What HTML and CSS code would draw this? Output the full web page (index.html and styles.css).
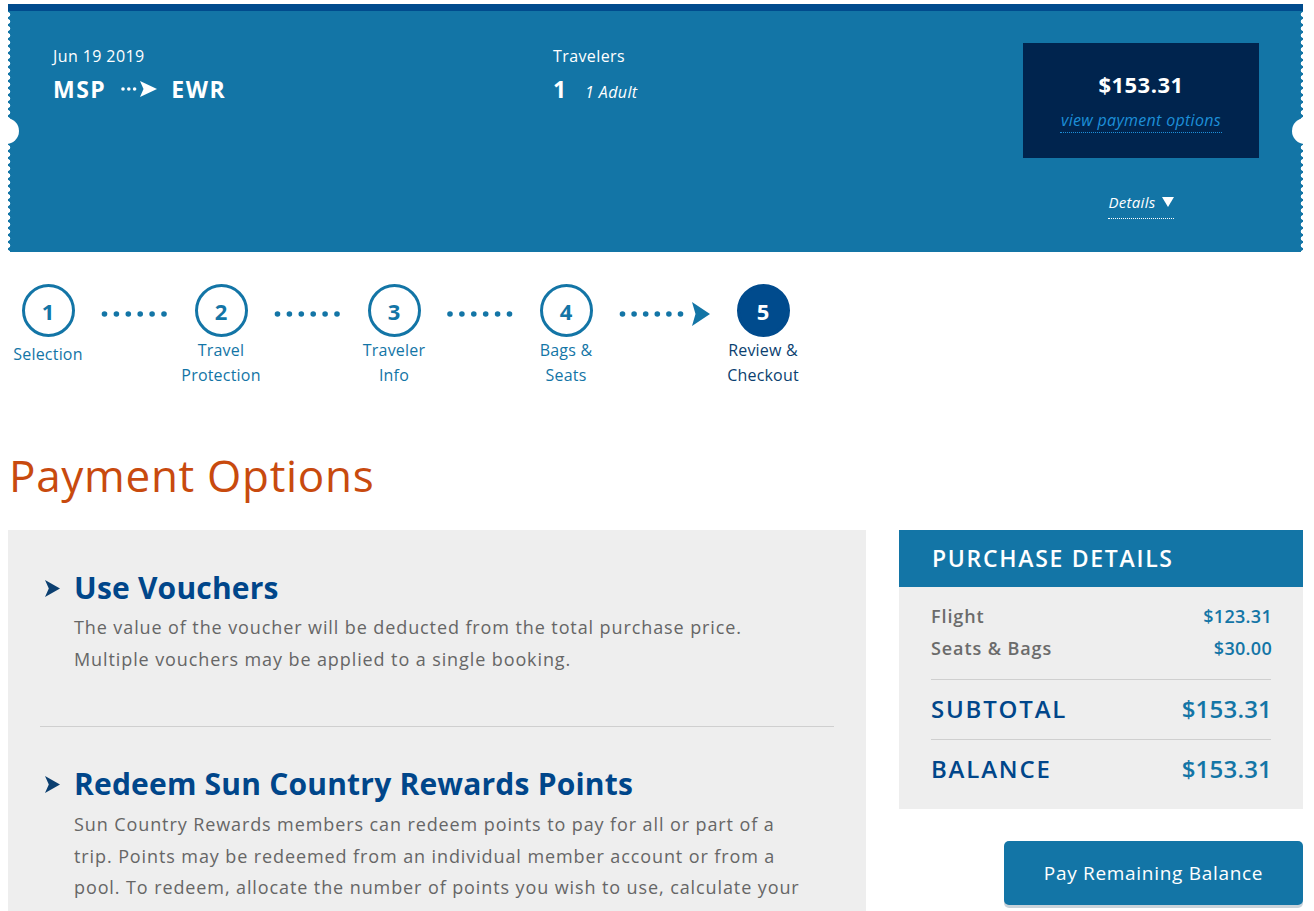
FILE: index.html
```html
<!DOCTYPE html>
<html lang="en">
<head>
<meta charset="utf-8">
<title>Payment Options</title>
<link rel="stylesheet" href="styles.css">
</head>
<body>
<div class="page">
  <header class="trip">
    <span class="edge edge-l"></span>
    <span class="edge edge-r"></span>
    <span class="notch notch-l"></span>
    <span class="notch notch-r"></span>
    <div class="trip-route">
      <div class="trip-label">Jun 19 2019</div>
      <div class="route">
        <span class="code">MSP</span>
        <svg class="route-arrow" width="37" height="16" viewBox="0 0 37 16" aria-hidden="true">
          <circle cx="2" cy="8" r="1.8" fill="#fff"/>
          <circle cx="7.8" cy="8" r="1.8" fill="#fff"/>
          <circle cx="13.6" cy="8" r="1.8" fill="#fff"/>
          <path d="M19 0 L36 8 L19 16 L22.5 8 Z" fill="#fff"/>
        </svg>
        <span class="code">EWR</span>
      </div>
    </div>
    <div class="trip-travelers">
      <div class="trip-label">Travelers</div>
      <div class="travelers"><span class="count">1</span><span class="adult">1 Adult</span></div>
    </div>
    <div class="trip-price">
      <div class="price-box">
        <div class="price">$153.31</div>
        <a class="pay-link" href="#">view payment options</a>
      </div>
      <a class="details" href="#">Details <svg width="12" height="10" viewBox="0 0 12 10" aria-hidden="true"><path d="M0 0 H12 L6 10 Z" fill="#fff"/></svg></a>
    </div>
  </header>

  <nav class="steps">
    <div class="step">
      <div class="step-circle">1</div>
      <div class="step-label single">Selection</div>
    </div>
    <div class="connector c93">
      <svg width="93" height="53" viewBox="0 0 93 53" aria-hidden="true">
        <circle cx="16.5" cy="30" r="2.8"/><circle cx="28.4" cy="30" r="2.8"/><circle cx="40.3" cy="30" r="2.8"/><circle cx="52.2" cy="30" r="2.8"/><circle cx="64.1" cy="30" r="2.8"/><circle cx="76" cy="30" r="2.8"/>
      </svg>
    </div>
    <div class="step">
      <div class="step-circle">2</div>
      <div class="step-label">Travel<br>Protection</div>
    </div>
    <div class="connector c93">
      <svg width="93" height="53" viewBox="0 0 93 53" aria-hidden="true">
        <circle cx="16.5" cy="30" r="2.8"/><circle cx="28.4" cy="30" r="2.8"/><circle cx="40.3" cy="30" r="2.8"/><circle cx="52.2" cy="30" r="2.8"/><circle cx="64.1" cy="30" r="2.8"/><circle cx="76" cy="30" r="2.8"/>
      </svg>
    </div>
    <div class="step">
      <div class="step-circle">3</div>
      <div class="step-label">Traveler<br>Info</div>
    </div>
    <div class="connector c92">
      <svg width="92" height="53" viewBox="0 0 92 53" aria-hidden="true">
        <circle cx="16" cy="30" r="2.8"/><circle cx="27.9" cy="30" r="2.8"/><circle cx="39.8" cy="30" r="2.8"/><circle cx="51.7" cy="30" r="2.8"/><circle cx="63.6" cy="30" r="2.8"/><circle cx="75.5" cy="30" r="2.8"/>
      </svg>
    </div>
    <div class="step">
      <div class="step-circle">4</div>
      <div class="step-label">Bags &amp;<br>Seats</div>
    </div>
    <div class="connector c117">
      <svg width="117" height="53" viewBox="0 0 117 53" aria-hidden="true">
        <circle cx="16.5" cy="30" r="2.8"/><circle cx="28.1" cy="30" r="2.8"/><circle cx="39.7" cy="30" r="2.8"/><circle cx="51.3" cy="30" r="2.8"/><circle cx="62.9" cy="30" r="2.8"/><circle cx="74.5" cy="30" r="2.8"/>
        <path d="M86 18 L104 30 L86 42 L89.5 30 Z"/>
      </svg>
    </div>
    <div class="step current">
      <div class="step-circle">5</div>
      <div class="step-label">Review &amp;<br>Checkout</div>
    </div>
  </nav>

  <h1 class="page-title">Payment Options</h1>

  <main class="main">
    <section class="options">
      <div class="option">
        <h2 class="option-head">
          <svg class="chev" width="15" height="17" viewBox="0 0 15 17" aria-hidden="true"><path d="M0 0 L15 8.5 L0 17 L3.8 8.5 Z"/></svg>
          <span>Use Vouchers</span>
        </h2>
        <p class="option-text">The value of the voucher will be deducted from the total purchase price.<br>Multiple vouchers may be applied to a single booking.</p>
      </div>
      <div class="option option-sep">
        <h2 class="option-head">
          <svg class="chev" width="15" height="17" viewBox="0 0 15 17" aria-hidden="true"><path d="M0 0 L15 8.5 L0 17 L3.8 8.5 Z"/></svg>
          <span>Redeem Sun Country Rewards Points</span>
        </h2>
        <p class="option-text">Sun Country Rewards members can redeem points to pay for all or part of a<br>trip. Points may be redeemed from an individual member account or from a<br>pool. To redeem, allocate the number of points you wish to use, calculate your</p>
      </div>
    </section>

    <aside class="side">
      <div class="summary">
        <div class="summary-head">PURCHASE DETAILS</div>
        <div class="summary-body">
          <div class="sum-row"><span>Flight</span><span class="val">$123.31</span></div>
          <div class="sum-row"><span>Seats &amp; Bags</span><span class="val">$30.00</span></div>
          <div class="sum-total first"><span>SUBTOTAL</span><span class="val">$153.31</span></div>
          <div class="sum-total"><span>BALANCE</span><span class="val">$153.31</span></div>
        </div>
      </div>
      <button class="pay-btn" type="button">Pay Remaining Balance</button>
    </aside>
  </main>
</div>
</body>
</html>
```

FILE: styles.css
```css
html, body {
  margin: 0;
  padding: 0;
  background: #ffffff;
}

body {
  font-family: "Open Sans", "Liberation Sans", sans-serif;
  color: #666666;
  overflow: hidden;
}

.page {
  padding: 4px 11px 0 8px;
}

/* ---------- Ticket header ---------- */
.trip {
  position: relative;
  box-sizing: border-box;
  height: 248px;
  background: #1375a6;
  border-top: 7px solid #004b8d;
  display: flex;
  padding: 32px 44px 0 45px;
  color: #ffffff;
}

.edge {
  position: absolute;
  top: 0;
  bottom: 0;
  width: 3px;
  background-repeat: repeat-y;
  background-size: 3px 7px;
}

.edge-l {
  left: 0;
  background-image: radial-gradient(circle at 0 50%, #ffffff 2px, rgba(255,255,255,0) 2.6px);
}

.edge-r {
  right: 0;
  background-image: radial-gradient(circle at 100% 50%, #ffffff 2px, rgba(255,255,255,0) 2.6px);
}

.notch {
  position: absolute;
  top: 107px;
  width: 26px;
  height: 26px;
  border-radius: 50%;
  background: #ffffff;
}

.notch-l { left: -15px; }
.notch-r { right: -15px; }

.trip-route {
  width: 500px;
  padding-top: 3px;
}

.trip-travelers {
  flex: 1;
  padding-top: 3px;
}

.trip-label {
  font-size: 16px;
  line-height: 20px;
  letter-spacing: 0.4px;
}

.route {
  margin-top: 8px;
  display: flex;
  align-items: center;
  height: 30px;
}

.code {
  font-size: 23px;
  font-weight: 700;
  letter-spacing: 1.5px;
  line-height: 30px;
}

.route-arrow {
  margin: 0 13px 0 15px;
}

.travelers {
  margin-top: 8px;
  display: flex;
  align-items: baseline;
  height: 30px;
}

.count {
  font-size: 23px;
  font-weight: 700;
  line-height: 30px;
  width: 32px;
}

.adult {
  font-size: 16px;
  font-style: italic;
  letter-spacing: 0.4px;
}

.trip-price {
  width: 236px;
  display: flex;
  flex-direction: column;
  align-items: center;
}

.price-box {
  box-sizing: border-box;
  width: 236px;
  height: 115px;
  background: #00244e;
  padding-top: 26px;
  display: flex;
  flex-direction: column;
  align-items: center;
}

.price {
  font-size: 22px;
  font-weight: 700;
  line-height: 30px;
  letter-spacing: 0.5px;
}

.pay-link {
  margin-top: 11px;
  font-size: 16px;
  font-style: italic;
  line-height: 21px;
  letter-spacing: 0.3px;
  color: #1d8fd8;
  text-decoration: none;
  border-bottom: 1px dotted #1d8fd8;
  padding: 0 1px 1px;
}

.details {
  margin-top: 34px;
  font-size: 15px;
  font-style: italic;
  line-height: 20px;
  letter-spacing: 0.3px;
  color: #ffffff;
  text-decoration: none;
  border-bottom: 1px dotted #ffffff;
  padding-bottom: 6px;
  display: flex;
  align-items: center;
  gap: 6px;
}

/* ---------- Steps ---------- */
.steps {
  display: flex;
  align-items: flex-start;
  margin-top: 32px;
}

.step {
  width: 80px;
  display: flex;
  flex-direction: column;
  align-items: center;
}

.step-circle {
  box-sizing: border-box;
  width: 53px;
  height: 53px;
  border: 3px solid #1375a6;
  border-radius: 50%;
  display: flex;
  align-items: center;
  justify-content: center;
  font-size: 22px;
  font-weight: 700;
  color: #1375a6;
}

.step.current .step-circle {
  background: #004b8d;
  border-color: #004b8d;
  color: #ffffff;
}

.step-label {
  margin-top: 1px;
  font-size: 16px;
  line-height: 25px;
  letter-spacing: 0.2px;
  text-align: center;
  color: #1375a6;
  white-space: nowrap;
}

.step-label.single {
  margin-top: 5px;
}

.step.current .step-label {
  color: #0b3f70;
}

.connector svg {
  display: block;
  fill: #1375a6;
}

.c93 { width: 93px; }
.c92 { width: 92px; }
.c117 { width: 117px; }

/* ---------- Title ---------- */
.page-title {
  margin: 61px 0 0 1px;
  font-size: 44px;
  font-weight: 400;
  line-height: 52px;
  letter-spacing: 0.7px;
  color: #c84a0e;
}

/* ---------- Main ---------- */
.main {
  margin-top: 29px;
  display: flex;
  align-items: flex-start;
  gap: 33px;
}

.options {
  box-sizing: border-box;
  width: 858px;
  min-height: 420px;
  background: #eeeeee;
  padding: 38px 32px 40px;
}

.option-sep {
  margin-top: 51px;
  border-top: 1px solid #cfcfcf;
  padding-top: 37px;
}

.option-head {
  margin: 0;
  padding-left: 5px;
  display: flex;
  align-items: center;
  gap: 14px;
  font-size: 30px;
  font-weight: 700;
  line-height: 40px;
  letter-spacing: 0.2px;
  color: #00468a;
}

.chev {
  fill: #0b3f70;
  flex: none;
}

.option-text {
  margin: 3px 0 0 34px;
  font-size: 18px;
  line-height: 32px;
  letter-spacing: 0.9px;
  color: #666666;
  white-space: nowrap;
}

.option-sep .option-text {
  margin-top: 5px;
  line-height: 31.5px;
}

/* ---------- Summary ---------- */
.side {
  width: 404px;
  display: flex;
  flex-direction: column;
  align-items: flex-end;
}

.summary {
  width: 100%;
  background: #eeeeee;
}

.summary-head {
  height: 57px;
  line-height: 57px;
  background: #1375a6;
  color: #ffffff;
  font-size: 23px;
  font-weight: 600;
  letter-spacing: 1.7px;
  padding-left: 33px;
}

.summary-body {
  padding: 13px 32px 20px;
}

.sum-row {
  display: flex;
  justify-content: space-between;
  font-size: 18px;
  font-weight: 600;
  line-height: 32px;
  letter-spacing: 0.9px;
  color: #6b6b6b;
}

.sum-row .val {
  color: #1375a6;
  letter-spacing: 0.3px;
  margin-right: -1px;
}

.sum-total .val {
  color: #1375a6;
  letter-spacing: 0.2px;
  margin-right: -1px;
}

.sum-total {
  display: flex;
  justify-content: space-between;
  border-top: 1px solid #cfcfcf;
  padding: 9px 0 10px;
  font-size: 24px;
  font-weight: 600;
  line-height: 40px;
  letter-spacing: 1.8px;
  color: #00468a;
}

.sum-total.first {
  margin-top: 15px;
}

.sum-total:last-child {
  padding-bottom: 0;
}

.pay-btn {
  margin-top: 32px;
  width: 299px;
  height: 64px;
  border: none;
  border-radius: 5px;
  background: #1375a6;
  box-shadow: 0 3px 0 #c9d3da;
  color: #ffffff;
  font-family: "Open Sans", "Liberation Sans", sans-serif;
  font-size: 19px;
  font-weight: 400;
  letter-spacing: 0.7px;
  line-height: 60px;
  padding: 0;
  cursor: pointer;
}
```
